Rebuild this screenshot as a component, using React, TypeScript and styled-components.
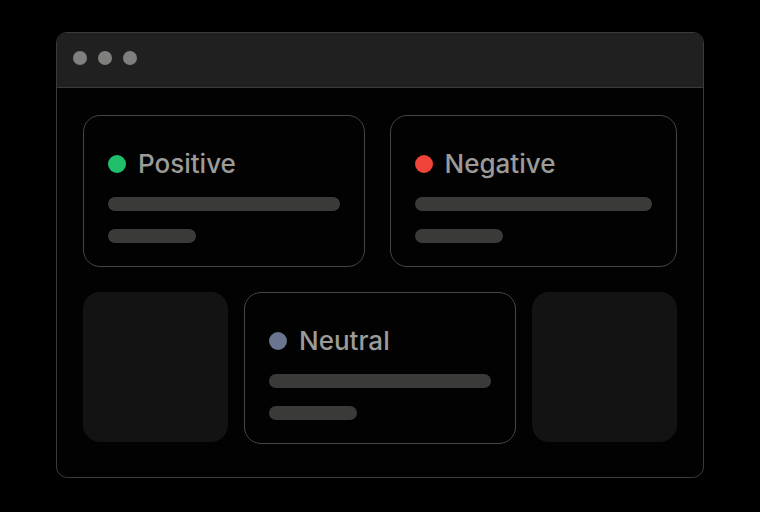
import React from "react";
import styled, { createGlobalStyle } from "styled-components";

const Global = createGlobalStyle`
  html, body { margin: 0; padding: 0; background: #000; }
  body { font-family: Inter, "Noto Sans", sans-serif; }
`;

const Page = styled.div`
  width: 760px;
  height: 512px;
  box-sizing: border-box;
  padding: 32px 56px 0 56px;
  background: #000;
`;

const Window = styled.div`
  height: 446px;
  box-sizing: border-box;
  border: 1px solid #3a3b3a;
  border-radius: 11px;
  overflow: hidden;
  display: flex;
  flex-direction: column;
  background: #020202;
`;

const TitleBar = styled.div`
  height: 55px;
  box-sizing: border-box;
  flex: none;
  background: #1f201f;
  border-bottom: 1px solid #3a3b3a;
  display: flex;
  align-items: flex-start;
  gap: 11px;
  padding: 18px 0 0 16px;
`;

const Dot = styled.span`
  width: 14px;
  height: 14px;
  border-radius: 50%;
  background: #7f807e;
`;

const Content = styled.div`
  padding: 27px 26px 0 26px;
  display: flex;
  flex-direction: column;
  gap: 25px;
`;

const TopRow = styled.div`
  display: grid;
  grid-template-columns: 282fr 288fr;
  gap: 25px;
`;

const BottomRow = styled.div`
  display: grid;
  grid-template-columns: 145px 272px 145px;
  gap: 16px;
  align-items: start;
`;

const Card = styled.div`
  box-sizing: border-box;
  height: 152px;
  border: 1px solid #444544;
  border-radius: 17px;
  padding: 30px 24px 23px 24px;
  display: flex;
  flex-direction: column;
  background: #020202;
`;

const Ghost = styled.div`
  height: 150px;
  border-radius: 17px;
  background: #121312;
`;

const TitleRow = styled.div`
  height: 36px;
  display: flex;
  align-items: center;
  gap: 12px;
  margin-bottom: 15px;
`;

const StatusDot = styled.span<{ $color: string }>`
  width: 18px;
  height: 18px;
  border-radius: 50%;
  background: ${(p) => p.$color};
  flex: none;
`;

const Label = styled.span`
  font-family: Inter, "Noto Sans", sans-serif;
  font-weight: 500;
  font-size: 26px;
  line-height: 36px;
  color: #9b9c9a;
`;

const Bar = styled.div<{ $short?: boolean }>`
  height: 14px;
  border-radius: 7px;
  background: #3a3b39;
  width: ${(p) => (p.$short ? "88px" : "100%")};
  & + & {
    margin-top: 18px;
  }
`;

const StatusCard = ({ color, label }: { color: string; label: string }) => (
  <Card>
    <TitleRow>
      <StatusDot $color={color} />
      <Label>{label}</Label>
    </TitleRow>
    <Bar />
    <Bar $short />
  </Card>
);

export default function App() {
  return (
    <>
      <Global />
      <Page>
        <Window>
          <TitleBar>
            <Dot />
            <Dot />
            <Dot />
          </TitleBar>
          <Content>
            <TopRow>
              <StatusCard color="#1fbf6c" label="Positive" />
              <StatusCard color="#f0433a" label="Negative" />
            </TopRow>
            <BottomRow>
              <Ghost />
              <StatusCard color="#6b7590" label="Neutral" />
              <Ghost />
            </BottomRow>
          </Content>
        </Window>
      </Page>
    </>
  );
}
